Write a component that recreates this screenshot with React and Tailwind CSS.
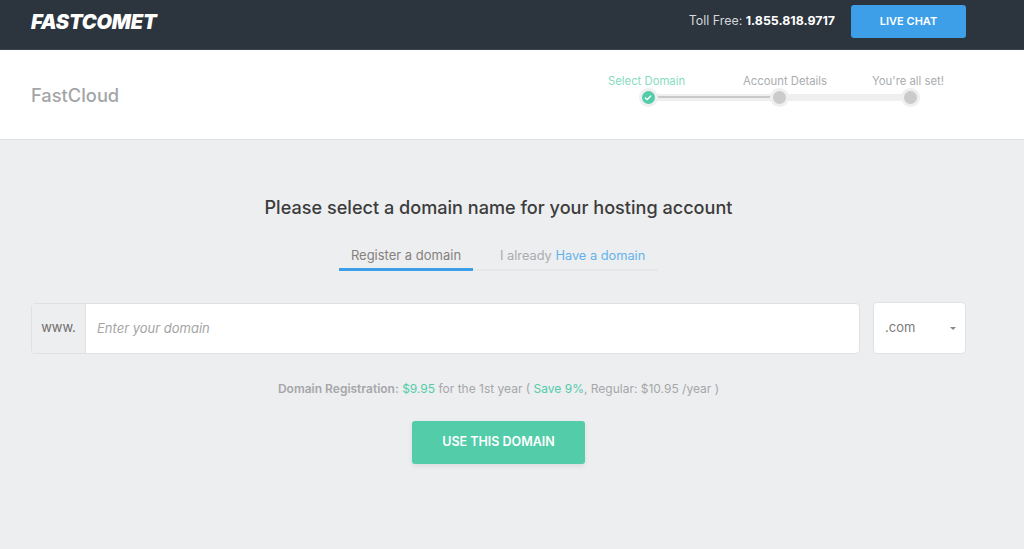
import { Check } from "lucide-react";

function Step({ label, active }) {
  return (
    <span className={`text-[11.3px] leading-4 whitespace-nowrap ${active ? "text-[#86dcc0]" : "text-[#aaacae]"}`}>
      {label}
    </span>
  );
}

function Dot({ children, color }) {
  return (
    <div className="relative w-[19px] h-[19px] rounded-full bg-[#efefef] flex items-center justify-center">
      <div className={`w-[13px] h-[13px] rounded-full flex items-center justify-center ${color}`}>{children}</div>
    </div>
  );
}

function Stepper() {
  return (
    <div className="w-[336px] pt-[23px] ml-auto mr-[80px] flex flex-col">
      <div className="flex gap-[58px] whitespace-nowrap">
        <Step label="Select Domain" active />
        <Step label="Account Details" />
      </div>
      <div className="relative -mt-[16px] flex justify-end">
        <Step label="You're all set!" />
      </div>
      <div className="relative -mt-[1px] ml-[30.5px] w-[281px] h-[19px] flex items-center justify-between">
        <div className="absolute left-[9px] right-[9px] top-[6px] h-[7px] bg-[#efefef]"></div>
        <div className="absolute left-[9px] w-[131px] top-[8px] h-[2px] bg-[#c9c9c9]"></div>
        <Dot color="bg-[#52cca9]">
          <Check size={8} strokeWidth={4} color="#fff" />
        </Dot>
        <Dot color="bg-[#cbcbcb]" />
        <Dot color="bg-[#cbcbcb]" />
      </div>
    </div>
  );
}

export default function App() {
  return (
    <div className="w-[1024px] h-[549px] overflow-hidden flex flex-col bg-[#edeef0] font-['Inter',sans-serif]">
      {/* top bar */}
      <header className="h-[50px] shrink-0 bg-[#2c343d] border-b border-[#3c444d] flex items-center pl-[31px] pr-[58px]">
        <span className="text-white italic font-black text-[20px] leading-none tracking-[-0.2px] -mt-[6px]">
          FASTCOMET
        </span>
        <div className="ml-auto flex items-center gap-4 -mt-[7px]">
          <span className="text-[12.4px] text-[#d5d7d9]">
            Toll Free: <span className="font-bold text-white">1.855.818.9717</span>
          </span>
          <button className="w-[115px] h-[33px] rounded-[3px] bg-[#3d9fe8] text-white text-[11px] font-semibold">
            LIVE CHAT
          </button>
        </div>
      </header>

      {/* plan + steps */}
      <section className="h-[90px] shrink-0 bg-white border-b border-[#dfdfdf] flex pl-[31px]">
        <h1 className="text-[18.3px] font-medium text-[#a3a5a7] mt-[33px] leading-6">FastCloud</h1>
        <Stepper />
      </section>

      <main className="flex-1 flex flex-col items-center pl-[31px] pr-[58px]">
        <h2 className="mt-[55px] text-[18.1px] leading-6 font-medium text-[#3c3c3c] whitespace-nowrap">
          Please select a domain name for your hosting account
        </h2>

        <div className="mt-[23px] w-[319px] flex border-b-2 border-[#e6e7e9] h-[29px]">
          <div className="w-[134px] h-[29px] border-b-[3px] border-[#3d9fe8] text-center text-[13px] leading-[27px] text-[#85807b]">
            Register a domain
          </div>
          <div className="flex-1 pl-[27px] text-[12.8px] leading-[27px] text-[#aaacae]">
            I already <span className="text-[#62b3ec]">Have a domain</span>
          </div>
        </div>

        <div className="mt-[31px] w-full flex items-center gap-[13px]">
          <div className="flex-1 h-[51px] flex rounded-[4px] border border-[#e0e1e3] bg-white overflow-hidden">
            <span className="w-[54px] shrink-0 bg-[#edeef0] border-r border-[#e0e1e3] flex items-center justify-center text-[13px] text-[#6d6d6d]">
              www.
            </span>
            <input
              placeholder="Enter your domain"
              className="flex-1 pl-[11px] pt-[2px] text-[13px] italic outline-none placeholder:text-[#a5a5a5]"
            />
          </div>
          <div className="w-[93px] h-[52px] shrink-0 rounded-[4px] border border-[#e0e1e3] bg-white flex items-center pl-[11px] pr-[9px] text-[13px] text-[#7a7a7a]">
            .com
            <span className="ml-auto w-0 h-0 border-x-[3px] border-x-transparent border-t-[3px] border-t-[#888]"></span>
          </div>
        </div>

        <p className="mt-[27px] text-[12px] leading-4 text-[#a5a7a9] whitespace-nowrap">
          <span className="font-semibold">Domain Registration:</span> <span className="text-[#52cca9]">$9.95</span> for the 1st year ( <span className="text-[#52cca9]">Save 9%</span>, Regular: $10.95 /year )
        </p>

        <button className="mt-[24px] w-[173px] h-[43px] rounded-[3px] bg-[#52cca9] text-white text-[12.5px] font-semibold shadow-[0_2px_5px_rgba(0,0,0,0.08)]">
          USE THIS DOMAIN
        </button>
      </main>
    </div>
  );
}
